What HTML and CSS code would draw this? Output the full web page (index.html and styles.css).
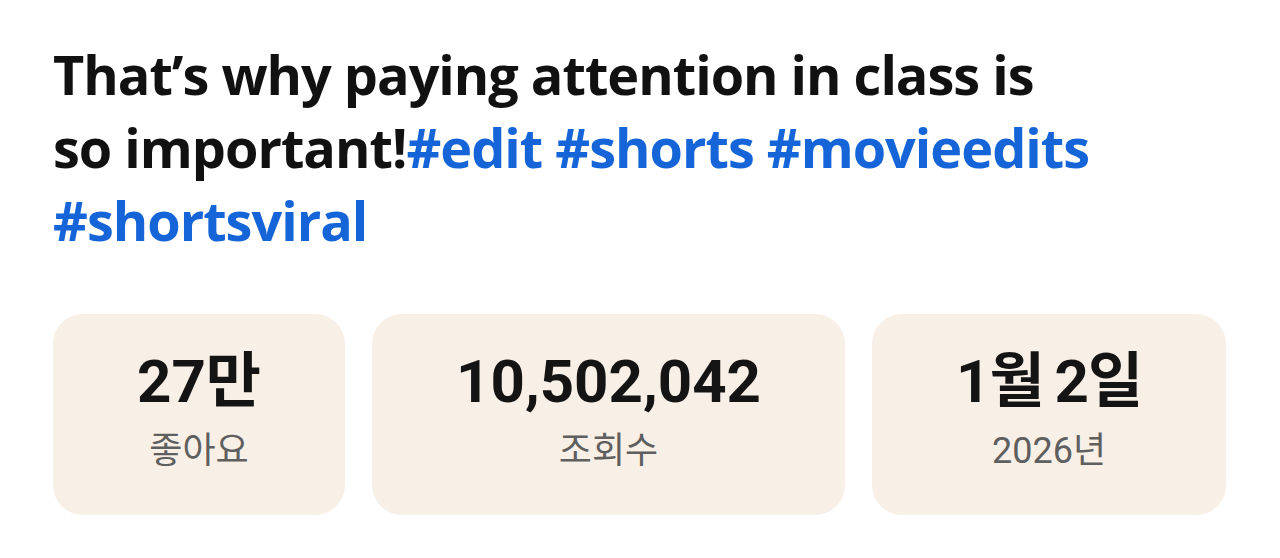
FILE: index.html
```html
<!DOCTYPE html>
<html lang="ko">
<head>
<meta charset="utf-8">
<link rel="stylesheet" href="styles.css">
</head>
<body>
<main class="page">
  <h1 class="title">That’s why paying attention in class is so important!<span class="tag">#edit</span> <span class="tag">#shorts</span> <span class="tag">#movieedits</span> <span class="tag">#shortsviral</span></h1>
  <div class="stats">
    <div class="card">
      <div class="num">27만</div>
      <div class="label">좋아요</div>
    </div>
    <div class="card">
      <div class="num">10,502,042</div>
      <div class="label">조회수</div>
    </div>
    <div class="card">
      <div class="num">1월 2일</div>
      <div class="label">2026년</div>
    </div>
  </div>
</main>
</body>
</html>
```
FILE: styles.css
```css
html, body {
  margin: 0;
  padding: 0;
  background: #ffffff;
}
.page {
  padding: 38px 53px 0 53px;
}
.title {
  margin: 0;
  width: 1046px;
  font-family: "Open Sans", "Noto Sans", sans-serif;
  font-weight: 700;
  font-size: 54px;
  line-height: 73px;
  color: #111111;
  letter-spacing: -1px;
}
.tag {
  color: #1565d8;
}
.stats {
  display: flex;
  gap: 27px;
  margin-top: 57px;
}
.card {
  flex: none;
  background: #f8efe6;
  border-radius: 30px;
  height: 201px;
  padding: 0 84px;
  display: flex;
  flex-direction: column;
  align-items: center;
  justify-content: center;
  box-sizing: border-box;
  white-space: nowrap;
}
.num {
  font-family: Roboto, "Noto Sans CJK KR", sans-serif;
  font-weight: 700;
  font-size: 60px;
  line-height: 71px;
  color: #141414;
  margin-bottom: 3px;
}
.label {
  font-family: Roboto, "Noto Sans CJK KR", sans-serif;
  font-weight: 400;
  font-size: 36px;
  line-height: 63px;
  color: #5f5f5f;
}
.card:last-child .num {
  letter-spacing: -1px;
  word-spacing: -3px;
}
```
